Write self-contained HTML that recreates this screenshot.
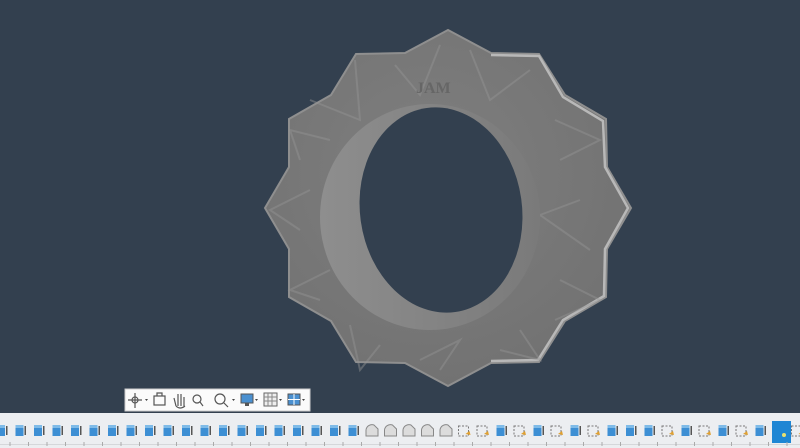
<!DOCTYPE html>
<html><head><meta charset="utf-8"><style>
html,body{margin:0;padding:0;width:800px;height:448px;overflow:hidden;background:#33404f;font-family:"Liberation Sans",sans-serif}
</style></head><body>
<svg width="800" height="448" viewBox="0 0 800 448" xmlns="http://www.w3.org/2000/svg" style="position:absolute;left:0;top:0">
<defs>
<radialGradient id="gg" cx="0.45" cy="0.4" r="0.7">
<stop offset="0" stop-color="#7f7f7f"/><stop offset="1" stop-color="#707070"/></radialGradient>
<linearGradient id="band" x1="0" y1="0" x2="1" y2="0">
<stop offset="0" stop-color="#8e8e8e"/><stop offset="0.5" stop-color="#848484"/><stop offset="1" stop-color="#7a7a7a"/></linearGradient>
<g id="cube"><rect x="-5" y="-6" width="8" height="11" fill="#3d8fd4"/><rect x="-5" y="-6" width="8" height="3" fill="#7fbbe8"/><rect x="4" y="-5" width="1.5" height="9" fill="#555"/></g>
<g id="circ"><path d="M-6,5 L-6,-1 A6,6 0 0 1 2,-6 L6,-2 L6,5 Z" fill="#dcdcdc" stroke="#888" stroke-width="1"/></g>
<g id="dash"><rect x="-6" y="-5" width="10" height="10" fill="none" stroke="#777" stroke-dasharray="2 1.5"/><path d="M1,3 L5,0 L6,4 Z" fill="#e0a030"/></g>
</defs>
<rect width="800" height="448" fill="#33404f"/>
<polygon fill="url(#gg)" stroke="#8f8f8f" stroke-width="2" points="631,208 607,249 606,297 565,321 539,362 491,363 448,386 405,363 356,362 331,321 289,297 289,249 265,208 289,167 289,119 331,95 356,54 405,53 448,30 491,53 539,54 565,95 606,119 607,167"/>
<polyline fill="none" stroke="#b8b8b8" stroke-width="2.5" points="491,55 539,56 563,97 603,121 605,167 628,208 605,249 604,296 563,320 538,360 491,361"/>
<g fill="none" stroke="#959595" stroke-width="2" opacity="0.45">
<path d="M310,100 L360,120 L355,60 M395,65 L420,95 L440,45 M470,50 L490,100 L530,70 M555,120 L600,140 L560,160 M580,200 L540,215 L590,250 M560,280 L600,300 L555,320 M520,330 L540,360 L500,350 M440,370 L460,340 L420,360 M380,345 L360,370 L350,325 M320,300 L290,290 L330,270 M300,230 L270,210 L310,190 M300,160 L290,130 L330,140"/>
</g>
<ellipse cx="430" cy="217" rx="110" ry="113" fill="url(#band)"/>
<ellipse cx="441" cy="210" rx="81" ry="103" transform="rotate(-8 441 210)" fill="#33404f"/>
<text x="416" y="93" font-family="Liberation Serif,serif" font-weight="bold" font-size="16" fill="#666">JAM</text>
<rect x="125" y="389" width="185" height="22" fill="#fbfbfb" stroke="#ccc"/>
<g fill="none" stroke="#555" stroke-width="1.2">
<path d="M135,393 V408 M128,400 H142"/><circle cx="135" cy="400" r="3"/>
<rect x="154" y="396" width="11" height="9"/><path d="M157,396 V393 H162 V396"/>
<path d="M176,406 L174,398 M178,406 V394 M181,406 V394 M184,406 V397 M176,406 Q180,410 185,406"/>
<circle cx="197" cy="399" r="4"/><path d="M200,402 L203,406"/>
<circle cx="220" cy="399" r="5"/><path d="M224,403 L228,407"/>
</g>
<g fill="#444"><path d="M145,399 l3,0 -1.5,2z M232,399 l3,0 -1.5,2z M255,399 l3,0 -1.5,2z M279,399 l3,0 -1.5,2z M302,399 l3,0 -1.5,2z"/></g>
<rect x="241" y="394" width="12" height="9" fill="#4a90d0" stroke="#555"/><rect x="245" y="403" width="4" height="3" fill="#555"/>
<rect x="264" y="393" width="13" height="13" fill="#eee" stroke="#666"/><path d="M268,393V406M272,393V406M264,397H277M264,401H277" stroke="#888"/>
<rect x="288" y="394" width="12" height="11" fill="#4a90d0" stroke="#555"/><path d="M294,394V405M288,399.5H300" stroke="#fff"/>
<rect x="0" y="413" width="800" height="35" fill="#eceef1"/>
<g transform="translate(0,431)">
<use href="#cube" x="2"/><use href="#cube" x="20.5"/><use href="#cube" x="39"/><use href="#cube" x="57.5"/><use href="#cube" x="76"/><use href="#cube" x="94.5"/><use href="#cube" x="113"/><use href="#cube" x="131.5"/><use href="#cube" x="150"/><use href="#cube" x="168.5"/><use href="#cube" x="187"/><use href="#cube" x="205.5"/><use href="#cube" x="224"/><use href="#cube" x="242.5"/><use href="#cube" x="261"/><use href="#cube" x="279.5"/><use href="#cube" x="298"/><use href="#cube" x="316.5"/><use href="#cube" x="335"/><use href="#cube" x="353.5"/>
<use href="#circ" x="372"/><use href="#circ" x="390.5"/><use href="#circ" x="409"/><use href="#circ" x="427.5"/><use href="#circ" x="446"/>
<use href="#dash" x="464.5"/><use href="#dash" x="483"/><use href="#cube" x="501.5"/><use href="#dash" x="520"/><use href="#cube" x="538.5"/><use href="#dash" x="557"/><use href="#cube" x="575.5"/><use href="#dash" x="594"/><use href="#cube" x="612.5"/><use href="#cube" x="631"/><use href="#cube" x="649.5"/><use href="#dash" x="668"/><use href="#cube" x="686.5"/><use href="#dash" x="705"/><use href="#cube" x="723.5"/><use href="#dash" x="742"/><use href="#cube" x="760.5"/>
<rect x="772" y="-10" width="19" height="22" fill="#1f86d4"/><circle cx="784" cy="4" r="2" fill="#e8e070"/>
<use href="#dash" x="797.5"/>
</g>
<path d="M0,444.5H800" stroke="#d5d7da"/>
<g stroke="#aaa"><path d="M10,442V446M28.5,442V446M47,442V446M65.5,442V446M84,442V446M102.5,442V446M121,442V446M139.5,442V446M158,442V446M176.5,442V446M195,442V446M213.5,442V446M232,442V446M250.5,442V446M269,442V446M287.5,442V446M306,442V446M324.5,442V446M343,442V446M361.5,442V446M380,442V446M398.5,442V446M417,442V446M435.5,442V446M454,442V446M472.5,442V446M491,442V446M509.5,442V446M528,442V446M546.5,442V446M565,442V446M583.5,442V446M602,442V446M620.5,442V446M639,442V446M657.5,442V446M676,442V446M694.5,442V446M713,442V446M731.5,442V446M750,442V446M768.5,442V446M787,442V446"/></g>
</svg>
</body></html>
